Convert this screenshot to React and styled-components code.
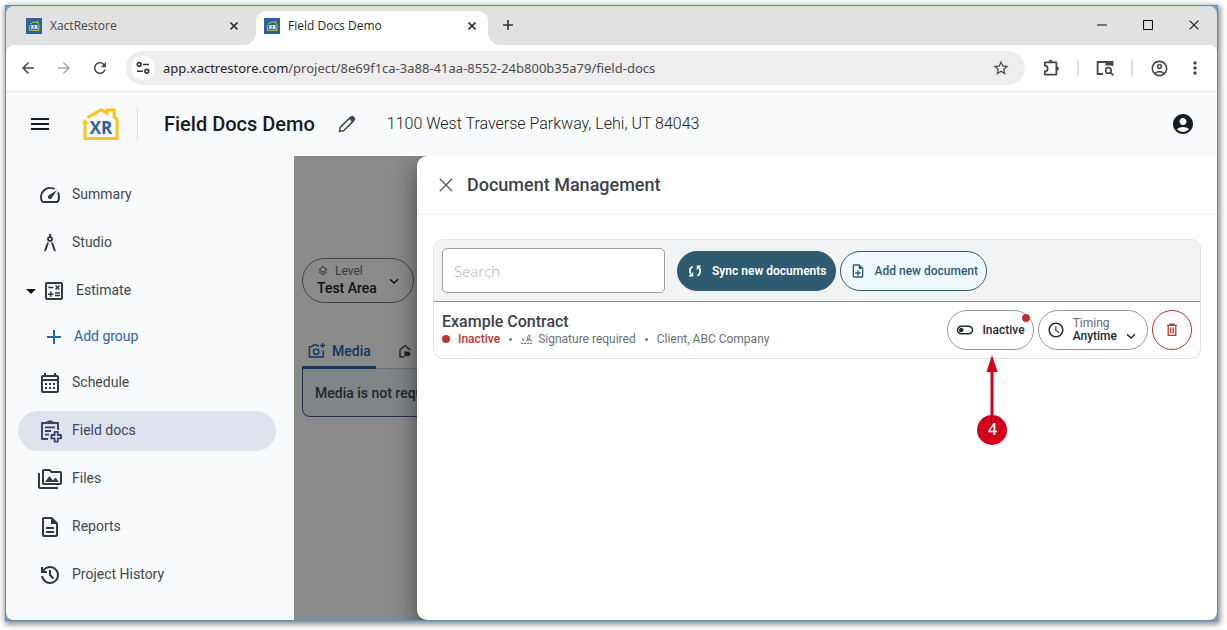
import React from 'react'
import styled, { createGlobalStyle } from 'styled-components'
import {
    MdAccessTime,
    MdAccountCircle,
    MdAdd,
    MdArchitecture,
    MdArrowBack,
    MdArrowForward,
    MdMoreVert,
    MdOutlineAccountCircle,
    MdOutlineCalculate,
    MdOutlineCalendarMonth,
    MdOutlineDescription,
    MdOutlineLayers,
    MdOutlineNoteAdd,
    MdOutlinePermMedia,
    MdOutlineToggleOff,
    MdRefresh,
    MdSpeed,
    MdStarBorder,
} from 'react-icons/md'

const GlobalStyle = createGlobalStyle`
    * {
        box-sizing: border-box;
    }

    body {
        margin: 0;
        background: #fff;
        font-family: Roboto, 'Liberation Sans', sans-serif;
        color: #42474e;
    }

    button {
        font-family: inherit;
        padding: 0;
        border: 0;
        background: none;
        color: inherit;
    }

    svg {
        display: block;
        flex-shrink: 0;
    }
`;

const Page = styled.div`
    height: 100vh;
    padding: 5px 9px 9px 5px;
`;

const Frame = styled.div`
    height: 100%;
    border: 1px solid #6d8ca8;
    background: #6fa3d0;
    box-shadow: 1px 2px 6px 1px rgba(0, 0, 0, 0.5);
`;

const Browser = styled.div`
    height: 100%;
    display: flex;
    flex-direction: column;
    border-radius: 8px;
    overflow: hidden;
    background: #e2e2e2;
`;

/* browser chrome */

const TabStrip = styled.div`
    display: flex;
    align-items: stretch;
    height: 39px;
    padding: 5px 0 0 12px;
    gap: 6px;
    font-family: 'Open Sans', 'Noto Sans', sans-serif;
`;

const Tab = styled.div`
    position: relative;
    display: flex;
    align-items: center;
    gap: 8px;
    width: 232px;
    padding: 0 8px 5px;
    border-radius: 10px 10px 0 0;
    background: ${ p => p.$active ? '#fff' : 'transparent' };
    color: ${ p => p.$active ? '#1f1f1f' : '#474747' };
    font-size: 12px;

    &::before,
    &::after {
        content: '';
        display: ${ p => p.$active ? 'block' : 'none' };
        position: absolute;
        bottom: 0;
        width: 12px;
        height: 12px;
    }

    &::before {
        left: -12px;
        background: radial-gradient(circle at 0 0, transparent 12px, #fff 12px);
    }

    &::after {
        right: -12px;
        background: radial-gradient(circle at 100% 0, transparent 12px, #fff 12px);
    }
`;

const TabTitle = styled.span`
    flex: 1;
    white-space: nowrap;
`;

const TabButton = styled.button`
    display: flex;
    align-items: center;
    justify-content: center;
    width: 16px;
    height: 16px;
    color: #333;
`;

const NewTab = styled(TabButton)`
    align-self: center;
    margin: 0 auto 6px 6px;
`;

const WindowButton = styled.button`
    display: flex;
    align-items: center;
    justify-content: center;
    width: 46px;
    padding-bottom: 6px;
    margin-left: -6px;
    color: #111;
`;

const AddressRow = styled.div`
    display: flex;
    align-items: center;
    height: 47px;
    padding: 0 4px;
    border-bottom: 1px solid #dcdfe4;
    border-radius: 8px 8px 0 0;
    background: #fff;
`;

const ChromeButton = styled.button`
    display: flex;
    align-items: center;
    justify-content: center;
    width: 36px;
    height: 36px;
    font-size: ${ p => p.$size || 18 }px;
    color: ${ p => p.$muted ? '#a8a8a8' : '#474747' };
`;

const Divider = styled.span`
    width: 2px;
    height: 16px;
    margin: 0 8px;
    background: #dedede;
`;

const UrlBar = styled.div`
    display: flex;
    align-items: center;
    flex: 1;
    height: 34px;
    margin: 0 8px;
    padding: 0 6px 0 5px;
    gap: 8px;
    border-radius: 17px;
    background: #efedee;
`;

const SiteInfo = styled.button`
    display: flex;
    align-items: center;
    justify-content: center;
    width: 24px;
    height: 24px;
    border-radius: 50%;
    background: #fff;
`;

const Url = styled.span`
    flex: 1;
    white-space: nowrap;
    font-family: 'Noto Sans', 'Open Sans', sans-serif;
    font-size: 13px;
    color: #4d4d4d;

    b {
        font-weight: 400;
        color: #1f1f1f;
    }
`;

/* app header */

const Header = styled.header`
    display: flex;
    align-items: center;
    height: 64px;
    padding: 0 22px 0 24px;
    background: #f9fafc;
    color: #171b22;
`;

const IconButton = styled.button`
    display: flex;
    align-items: center;
    justify-content: center;
`;

const LogoBox = styled.a`
    margin-left: 32px;
    padding-right: 17px;
    border-right: 1px solid #d9dbe0;
`;

const ProjectName = styled.h1`
    margin: 0 22px 0 26px;
    font-size: 20px;
    font-weight: 500;
`;

const Address = styled.span`
    flex: 1;
    margin-left: 30px;
    padding-bottom: 1px;
    font-size: 16px;
    font-weight: 300;
`;

/* side navigation */

const Body = styled.div`
    display: flex;
    flex: 1;
    min-height: 0;
`;

const Nav = styled.nav`
    display: flex;
    flex-direction: column;
    gap: 8px;
    width: 288px;
    padding: 19px 18px 0 12px;
    background: #f9fafc;
`;

const NavItem = styled.a`
    display: flex;
    align-items: center;
    gap: ${ p => p.$sub ? 8 : 10 }px;
    height: ${ p => p.$sub ? 36 : 40 }px;
    padding-left: ${ p => p.$nested ? (p.$sub ? 24 : 8) : 20 }px;
    border-radius: 20px;
    background: ${ p => p.$active ? '#dfe3ee' : 'transparent' };
    color: ${ p => p.$active ? '#3c4766' : p.$sub ? '#2d62a0' : '#42474e' };
    font-size: 14px;
    text-decoration: none;

    svg {
        font-size: 24px;
        color: ${ p => p.$active ? '#36456b' : p.$sub ? '#2d62a0' : '#34383f' };
    }

    span {
        padding-bottom: 2px;
    }
`;

const Caret = styled.i`
    border: 5px solid transparent;
    border-top-color: #111;
    border-bottom: 0;
    margin-right: -4px;
`;

/* page behind the drawer */

const Main = styled.main`
    position: relative;
    flex: 1;
    padding: 102px 8px 0;
    background: #fff;
    overflow: hidden;
`;

const LevelButton = styled.button`
    display: flex;
    align-items: center;
    gap: 11px;
    height: 45px;
    padding: 0 13px 0 14px;
    border: 1px solid #7b7e83;
    border-radius: 23px;
    text-align: left;
    color: #1c1f24;
`;

const LevelText = styled.span`
    padding-bottom: 2px;
    font-size: 14px;
    line-height: 17px;
    font-weight: 500;

    small {
        display: flex;
        align-items: center;
        gap: 6px;
        font-size: 12px;
        font-weight: 400;
        color: #63676d;
    }
`;

const MainTabs = styled.div`
    display: flex;
    gap: 16px;
    height: 35px;
    margin-top: 31px;
    border-bottom: 1px solid #d0d3d8;
`;

const MainTab = styled.button`
    display: flex;
    align-items: center;
    gap: 6px;
    height: 35px;
    padding: 2px 5px 0 6px;
    border-bottom: 3px solid ${ p => p.$active ? '#2767ad' : 'transparent' };
    color: ${ p => p.$active ? '#2767ad' : '#42474e' };
    font-size: 14px;
    font-weight: 500;
`;

const Notice = styled.div`
    height: 48px;
    padding: 14px 12px;
    border: 1px solid #3e5a94;
    border-top: 0;
    border-radius: 0 0 8px 8px;
    background: #ecf6fa;
    color: #42474e;
    font-size: 14px;
    line-height: 20px;
    font-weight: 500;
`;

const Scrim = styled.div`
    position: absolute;
    inset: 0;
    background: rgba(0, 0, 0, 0.46);
`;

/* document drawer */

const Drawer = styled.section`
    position: absolute;
    inset: 0 0 0 123px;
    border-radius: 10px 0 0 10px;
    background: #fff;
    box-shadow: 0 8px 24px rgba(0, 0, 0, 0.5);
`;

const DrawerHeader = styled.div`
    display: flex;
    align-items: center;
    gap: 14px;
    height: 59px;
    padding: 0 22px;
    border-bottom: 1px solid #eaecef;
    color: #5c6168;

    h2 {
        margin: 0;
        padding-bottom: 2px;
        font-size: 18px;
        font-weight: 500;
        color: #3c434b;
    }
`;

const Card = styled.div`
    margin: 24px 16px;
    border: 1px solid #dddfe2;
    border-radius: 10px;
`;

const CardToolbar = styled.div`
    display: flex;
    align-items: center;
    gap: 4px;
    padding: 8px;
    border-bottom: 1px solid #8f9296;
    border-radius: 10px 10px 0 0;
    background: #f2f3f5;
`;

const Search = styled.input`
    width: 223px;
    height: 45px;
    margin-right: 8px;
    padding: 0 11px;
    border: 1px solid #999ca0;
    border-radius: 5px;
    font-family: 'Open Sans', 'Noto Sans', sans-serif;
    font-size: 15px;
    font-weight: 300;

    &::placeholder {
        color: #aeb2b6;
    }
`;

const PillButton = styled.button`
    display: flex;
    align-items: center;
    gap: 9px;
    height: 40px;
    padding: 0 8px 0 9px;
    border: 1px solid #2f5b70;
    border-radius: 20px;
    background: ${ p => p.$primary ? '#2f5b70' : '#f0f9ff' };
    color: ${ p => p.$primary ? '#fff' : '#2f5b70' };
    font-size: 12px;
    font-weight: ${ p => p.$primary ? 600 : 500 };
    white-space: nowrap;

    svg {
        font-size: 16px;
    }
`;

const DocumentRow = styled.div`
    display: flex;
    align-items: center;
    gap: 4px;
    padding: 8px;
`;

const DocumentInfo = styled.div`
    flex: 1;

    h3 {
        margin: 0;
        font-size: 16px;
        line-height: 18px;
        font-weight: 500;
        color: #3c434b;
    }
`;

const Meta = styled.div`
    display: flex;
    align-items: center;
    gap: 9px;
    font-size: 12px;
    line-height: 16px;
    color: #6a6f75;
`;

const MetaItem = styled.span`
    display: flex;
    align-items: center;
    gap: ${ p => p.$status ? 8 : 5 }px;
    color: ${ p => p.$status ? '#b93632' : 'inherit' };
    font-weight: ${ p => p.$status ? 500 : 400 };
`;

const Dot = styled.i`
    width: 8px;
    height: 8px;
    border-radius: 50%;
    background: #b93632;
`;

const Bullet = styled.i`
    width: 3px;
    height: 3px;
    border-radius: 50%;
    background: #7a7e83;
`;

const ActionSlot = styled.div`
    position: relative;
`;

const Action = styled.button`
    display: flex;
    align-items: center;
    justify-content: center;
    gap: 8px;
    height: 40px;
    min-width: 40px;
    padding: ${ p => p.$danger ? '0' : p.$menu ? '0 10px 0 8px' : '0 8px' };
    border: 1px solid ${ p => p.$danger ? '#b93632' : '#96999d' };
    border-radius: 20px;
    background: #fff;
    color: ${ p => p.$danger ? '#b93632' : '#1f2a33' };
    font-size: 12px;
    font-weight: 500;
    text-align: left;

    span {
        line-height: 13px;
    }

    span + svg {
        margin-top: 12px;
    }

    small {
        display: block;
        font-size: 12px;
        font-weight: 400;
        color: #63676d;
    }
`;

const ActionBadge = styled(Dot)`
    position: absolute;
    top: 4px;
    right: 4px;
`;

const Callout = styled.div`
    position: absolute;
    top: 45px;
    left: 30px;
    display: flex;
    flex-direction: column;
    align-items: center;

    b {
        width: 30px;
        height: 30px;
        border-radius: 50%;
        background: #d3011c;
        color: #fff;
        font-family: 'Noto Sans', sans-serif;
        font-size: 16px;
        font-weight: 500;
        line-height: 29px;
        text-align: center;
    }
`;

const CloseIcon = ({ size = 8, width = 1.6 }) => (
    <svg width={ size } height={ size } viewBox="0 0 10 10" fill="none" stroke="currentColor" strokeWidth={ width * 10 / size }>
        <path d="M0.6 0.6 9.4 9.4M9.4 0.6 0.6 9.4" />
    </svg>
)

const HOUSE = 'M3 13V30.5H35V11.5L32.2 9V2H25V5.2L19 1.8 5.5 9.6'

const Favicon = () => (
    <svg width="16" height="16" viewBox="0 0 16 16">
        <path fill="#2a639b" d="M0 0h16v16H0z" />
        <g transform="translate(2.4 3.2) scale(0.3)">
            <path d={ HOUSE } fill="none" stroke="#e5c52f" strokeWidth="3" />
            <text x="19" y="26" textAnchor="middle" fontFamily="Open Sans, sans-serif" fontWeight="800" fontSize="17" fill="#fff">XR</text>
        </g>
    </svg>
)

const Logo = () => (
    <svg width="38" height="32" viewBox="0 0 38 32">
        <path d={ HOUSE } fill="none" stroke="#fcc419" strokeWidth="3" />
        <path d="M0 16 3 11 6.4 16z" fill="#fcc419" />
        <text x="19" y="26" textAnchor="middle" fontFamily="Open Sans, sans-serif" fontWeight="700" fontSize="17" fill="#2a639b">XR</text>
    </svg>
)

const TuneIcon = () => (
    <svg width="14" height="14" viewBox="0 0 14 14" fill="none" stroke="#333" strokeWidth="1.6">
        <circle cx="3.2" cy="3.5" r="1.9" />
        <circle cx="10.8" cy="10.3" r="1.9" />
        <path d="M7 3.5h6M1 10.3h6" />
    </svg>
)

const PuzzleIcon = () => (
    <svg width="18" height="18" viewBox="0 0 18 18">
        <path d="M2.8 3.4H14.4V15.6H2.8V12.4A2.9 2.9 0 0 0 2.8 6.6z" fill="none" stroke="currentColor" strokeWidth="1.8" strokeLinejoin="round" />
        <path d="M6.6 2.8a2 2 0 0 1 4 0zM15 7.4a2 2 0 0 1 0 4z" fill="currentColor" />
    </svg>
)

const TabSearchIcon = () => (
    <svg width="20" height="18" viewBox="0 0 20 18" fill="none" stroke="currentColor" strokeWidth="1.8">
        <path d="M8 15H2.6V3H17.5V7" />
        <path d="M10.5 3H18V6.6H10.5z" fill="currentColor" stroke="none" />
        <circle cx="13.4" cy="11.4" r="2.8" strokeWidth="1.6" />
        <path d="M15.4 13.4 18.4 16.4" strokeWidth="1.6" />
    </svg>
)

const MenuIcon = () => (
    <svg width="20" height="14" viewBox="0 0 20 14">
        <path d="M1 1h18v2H1zM1 6h18v2H1zM1 11h18v2H1z" fill="currentColor" />
    </svg>
)

const PencilIcon = () => (
    <svg width="20" height="20" viewBox="0 0 20 20" fill="none" stroke="#42474e" strokeWidth="1.5" strokeLinejoin="round">
        <path d="M3.2 13.4 13.4 3.2 16.8 6.6 6.6 16.8 2.5 17.5z" />
        <path d="M12 4.6 14.6 2.2Q15.6 1.6 16.6 2.6L17.4 3.4Q18.4 4.4 17.7 5.4L15.4 8z" fill="#42474e" strokeWidth="0.6" />
    </svg>
)

const HistoryIcon = () => (
    <svg width="24" height="24" viewBox="0 0 24 24" fill="currentColor">
        <path d="M12 21q-3.45 0-6.01-2.29T3.05 13H5.1q.35 2.6 2.31 4.3T12 19q2.93 0 4.96-2.04T19 12t-2.04-4.96T12 5q-1.73 0-3.23.8T6.25 8H9v2H3V4h2v2.35Q6.28 4.75 8.11 3.88T12 3q1.88 0 3.51.71t2.85 1.93 1.93 2.85T21 12t-.71 3.51-1.92 2.85-2.85 1.93T12 21m2.8-4.8L11 12.4V7h2v4.6l3.2 3.2z" />
    </svg>
)

const FieldDocsIcon = () => (
    <svg width="24" height="24" viewBox="0 0 24 24" fill="none" stroke="currentColor" strokeWidth="2" strokeLinejoin="round">
        <path d="M10 20H4V4H20V11" />
        <path d="M9 4V3H10.6A1.5 1.5 0 0 1 13.4 3H15V4" fill="currentColor" strokeWidth="1.4" />
        <path d="M7 8.4h10M7 12h6M7 15.6h4" strokeWidth="1.8" />
        <path d="M16.6 12.8h3.2v3.2h3.2v3.4h-3.2v3.2h-3.2v-3.2h-3.2v-3.4h3.2z" strokeWidth="1.8" />
    </svg>
)

const CameraIcon = () => (
    <svg width="18" height="16" viewBox="0 0 18 16" fill="none" stroke="currentColor" strokeWidth="1.4">
        <path d="M11 3H9.8L8.8 2H5.4L4 3.6H1.4V14H15.2V7.4" />
        <circle cx="8.2" cy="8.8" r="2.7" />
        <path d="M14.6 0v5M12.1 2.5h5" />
    </svg>
)

const HouseTagIcon = () => (
    <svg width="14" height="14" viewBox="0 0 14 14">
        <path d="M6 13H2V5.6L7 1.6 12 5.6V6.6" fill="none" stroke="currentColor" strokeWidth="1.4" />
        <path d="M6.4 7.4H10.8L13 9.9 10.8 12.2H6.4z" fill="currentColor" />
    </svg>
)

const SyncIcon = () => (
    <svg width="16" height="16" viewBox="0 0 16 16" fill="none" stroke="currentColor" strokeWidth="1.7">
        <path d="M5.6 3.4C2.2 5.2 2 10 4.8 12.2" />
        <path d="M10.4 12.8C13.8 11 14 6 11.2 3.8" />
        <path d="M2.2 12.8H5.6V9.4M13.6 3.2H10.4V6.6" strokeWidth="1.4" />
    </svg>
)

const SignatureIcon = () => (
    <svg width="12" height="12" viewBox="0 0 12 12" fill="none" stroke="currentColor">
        <path d="M1 5.4 3.4 7.8M3.4 5.4 1 7.8" strokeWidth="0.9" />
        <path d="M5 8C8 6.6 9.6 3.6 8.8 1.8 7.4 0.8 5.8 5.6 7 7.4 8 8.4 8.4 5.6 9.2 5.6 9 7.6 9.6 8 11.4 7.4" strokeWidth="1" />
        <path d="M0 10.5h12" strokeDasharray="2 1" />
    </svg>
)

const ChevronIcon = () => (
    <svg width="12" height="8" viewBox="0 0 12 8" fill="none" stroke="currentColor" strokeWidth="1.5">
        <path d="M2 2.2 6 6 10 2.2" />
    </svg>
)

const TrashIcon = () => (
    <svg width="12" height="14" viewBox="0 0 12 14" fill="none" stroke="currentColor" strokeWidth="1.3">
        <path d="M1 2.4H11M4 2V1.2H8V2M2.2 2.6V12.4H9.8V2.6M4.8 4.6V10.4M7.2 4.6V10.4" />
    </svg>
)

const ArrowUp = () => (
    <svg width="12" height="60" viewBox="0 0 12 60" fill="#d3011c">
        <path d="M6 0 11.5 17H7.5V60H4.5V17H0.5z" />
    </svg>
)

const NAV_TOP = [
    { label: 'Summary', Icon: MdSpeed },
    { label: 'Studio', Icon: MdArchitecture },
]

const NAV_BOTTOM = [
    { label: 'Schedule', Icon: MdOutlineCalendarMonth },
    { label: 'Field docs', Icon: FieldDocsIcon, active: true },
    { label: 'Files', Icon: MdOutlinePermMedia },
    { label: 'Reports', Icon: MdOutlineDescription },
    { label: 'Project History', Icon: HistoryIcon },
]

function BrowserTab({ title, active }) {
    return (
        <Tab $active={ active }>
            <Favicon />
            <TabTitle>{ title }</TabTitle>
            <TabButton aria-label="Close tab"><CloseIcon /></TabButton>
        </Tab>
    )
}

function BrowserChrome() {
    return (
        <>
            <TabStrip>
                <BrowserTab title="XactRestore" />
                <BrowserTab title="Field Docs Demo" active />
                <NewTab aria-label="New tab">
                    <svg width="12" height="12" viewBox="0 0 12 12" stroke="currentColor" strokeWidth="1.6">
                        <path d="M6 1v10M1 6h10" />
                    </svg>
                </NewTab>
                <WindowButton aria-label="Minimize">
                    <svg width="10" height="10" viewBox="0 0 10 10"><path d="M0 4h10v2H0z" fill="#777" /></svg>
                </WindowButton>
                <WindowButton aria-label="Maximize">
                    <svg width="10" height="10" viewBox="0 0 10 10"><rect x="0.5" y="0.5" width="9" height="9" rx="0.8" fill="none" stroke="currentColor" strokeWidth="1.1" /></svg>
                </WindowButton>
                <WindowButton aria-label="Close"><CloseIcon size={ 10 } width={ 1.1 } /></WindowButton>
            </TabStrip>
            <AddressRow>
                <ChromeButton aria-label="Back"><MdArrowBack /></ChromeButton>
                <ChromeButton aria-label="Forward" $muted><MdArrowForward /></ChromeButton>
                <ChromeButton aria-label="Reload"><MdRefresh /></ChromeButton>
                <UrlBar>
                    <SiteInfo aria-label="Site information"><TuneIcon /></SiteInfo>
                    <Url><b>app.xactrestore.com</b>/project/8e69f1ca-3a88-41aa-8552-24b800b35a79/field-docs</Url>
                    <ChromeButton aria-label="Bookmark"><MdStarBorder /></ChromeButton>
                </UrlBar>
                <ChromeButton aria-label="Extensions"><PuzzleIcon /></ChromeButton>
                <Divider />
                <ChromeButton aria-label="Search tabs"><TabSearchIcon /></ChromeButton>
                <Divider />
                <ChromeButton aria-label="Profile" $size={ 19 }><MdOutlineAccountCircle /></ChromeButton>
                <ChromeButton aria-label="More" $size={ 20 }><MdMoreVert /></ChromeButton>
            </AddressRow>
        </>
    )
}

function Sidebar() {
    return (
        <Nav>
            { NAV_TOP.map(({ label, Icon }) => (
                <NavItem key={ label } href="#"><Icon /><span>{ label }</span></NavItem>
            )) }
            <NavItem href="#" $nested><Caret /><MdOutlineCalculate /><span>Estimate</span></NavItem>
            <NavItem href="#" $nested $sub><MdAdd /><span>Add group</span></NavItem>
            { NAV_BOTTOM.map(({ label, Icon, active }) => (
                <NavItem key={ label } href="#" $active={ active }><Icon /><span>{ label }</span></NavItem>
            )) }
        </Nav>
    )
}

function DocumentDrawer() {
    return (
        <Drawer>
            <DrawerHeader>
                <IconButton aria-label="Close drawer"><CloseIcon size={ 14 } width={ 1.5 } /></IconButton>
                <h2>Document Management</h2>
            </DrawerHeader>
            <Card>
                <CardToolbar>
                    <Search type="text" placeholder="Search" aria-label="Search" />
                    <PillButton $primary><SyncIcon />Sync new documents</PillButton>
                    <PillButton><MdOutlineNoteAdd />Add new document</PillButton>
                </CardToolbar>
                <DocumentRow>
                    <DocumentInfo>
                        <h3>Example Contract</h3>
                        <Meta>
                            <MetaItem $status><Dot />Inactive</MetaItem>
                            <Bullet />
                            <MetaItem><SignatureIcon />Signature required</MetaItem>
                            <Bullet />
                            <MetaItem>Client, ABC Company</MetaItem>
                        </Meta>
                    </DocumentInfo>
                    <ActionSlot>
                        <Action><MdOutlineToggleOff size={ 18 } />Inactive</Action>
                        <ActionBadge />
                        <Callout><ArrowUp /><b>4</b></Callout>
                    </ActionSlot>
                    <Action $menu>
                        <MdAccessTime size={ 18 } />
                        <span><small>Timing</small>Anytime</span>
                        <ChevronIcon />
                    </Action>
                    <Action $danger aria-label="Delete"><TrashIcon /></Action>
                </DocumentRow>
            </Card>
        </Drawer>
    )
}

function App() {
    return (
        <Page>
            <GlobalStyle />
            <Frame>
                <Browser>
                    <BrowserChrome />
                    <Header>
                        <IconButton aria-label="Menu"><MenuIcon /></IconButton>
                        <LogoBox href="#" aria-label="Home"><Logo /></LogoBox>
                        <ProjectName>Field Docs Demo</ProjectName>
                        <IconButton aria-label="Edit project"><PencilIcon /></IconButton>
                        <Address>1100 West Traverse Parkway, Lehi, UT 84043</Address>
                        <IconButton aria-label="Account"><MdAccountCircle size={ 24 } /></IconButton>
                    </Header>
                    <Body>
                        <Sidebar />
                        <Main>
                            <LevelButton>
                                <LevelText>
                                    <small><MdOutlineLayers size={ 12 } />Level</small>
                                    Test Area
                                </LevelText>
                                <ChevronIcon />
                            </LevelButton>
                            <MainTabs>
                                <MainTab $active><CameraIcon />Media</MainTab>
                                <MainTab aria-label="Rooms"><HouseTagIcon /></MainTab>
                            </MainTabs>
                            <Notice>Media is not required</Notice>
                            <Scrim />
                            <DocumentDrawer />
                        </Main>
                    </Body>
                </Browser>
            </Frame>
        </Page>
    )
}

export default App
